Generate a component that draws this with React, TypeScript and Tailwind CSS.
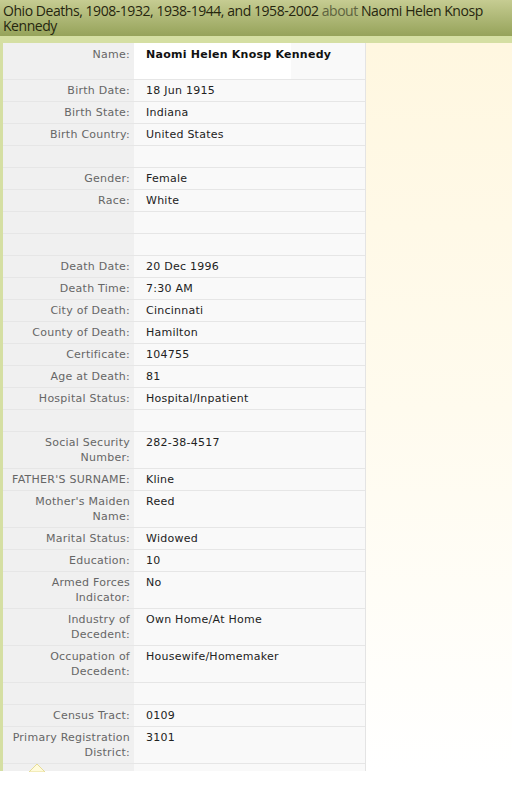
const rows: { label: string; value?: string }[] = [
  { label: "Birth Date:", value: "18 Jun 1915" },
  { label: "Birth State:", value: "Indiana" },
  { label: "Birth Country:", value: "United States" },
  { label: "" },
  { label: "Gender:", value: "Female" },
  { label: "Race:", value: "White" },
  { label: "" },
  { label: "" },
  { label: "Death Date:", value: "20 Dec 1996" },
  { label: "Death Time:", value: "7:30 AM" },
  { label: "City of Death:", value: "Cincinnati" },
  { label: "County of Death:", value: "Hamilton" },
  { label: "Certificate:", value: "104755" },
  { label: "Age at Death:", value: "81" },
  { label: "Hospital Status:", value: "Hospital/Inpatient" },
  { label: "" },
  { label: "Social Security Number:", value: "282-38-4517" },
  { label: "FATHER'S SURNAME:", value: "Kline" },
  { label: "Mother's Maiden Name:", value: "Reed" },
  { label: "Marital Status:", value: "Widowed" },
  { label: "Education:", value: "10" },
  { label: "Armed Forces Indicator:", value: "No" },
  { label: "Industry of Decedent:", value: "Own Home/At Home" },
  { label: "Occupation of Decedent:", value: "Housewife/Homemaker" },
  { label: "" },
  { label: "Census Tract:", value: "0109" },
  { label: "Primary Registration District:", value: "3101" },
];

export default function App() {
  return (
    <div className="w-[512px] h-[788px] bg-white overflow-hidden font-['DejaVu_Sans',Verdana,sans-serif]">
      <div className="h-[36px] bg-gradient-to-b from-[#c6cc92] to-[#96a35a] px-[3px] pt-[3px] text-[14px] leading-[15px] text-[#26260f] font-['Open_Sans',sans-serif] tracking-[-0.45px]">
        Ohio Deaths, 1908-1932, 1938-1944, and 1958-2002{" "}
        <span className="text-[#5e6340]">about</span> Naomi Helen Knosp Kennedy
      </div>
      <div className="h-[735px] border-l-[3px] border-[#d5dfa3] flex flex-col">
        <div className="h-[7px] bg-[#d5dfa3] shrink-0" />
        <div className="flex flex-1 min-h-0">
          <div className="w-[363px] shrink-0 flex flex-col border-r border-[#e4e4e4] bg-[#f9f9f9] text-[11px] leading-[15px] tracking-[0.25px]">
            <div className="flex h-[37px] border-b border-[#e6e6e6]">
              <div className="w-[131px] shrink-0 bg-[#f0f0f0] text-right text-[#666] pr-[4px] pt-[4px]">
                Name:
              </div>
              <div className="flex-1 relative pl-[12px] pt-[4px] text-[#111] font-bold">
                <div className="absolute left-0 top-0 bottom-0 w-[157px] bg-white" />
                <span className="relative">Naomi Helen Knosp Kennedy</span>
              </div>
            </div>
            {rows.map((r, i) => (
              <div key={i} className="flex border-b border-[#e6e6e6]">
                <div className="w-[131px] shrink-0 bg-[#f0f0f0] text-right text-[#666] pl-[8px] pr-[4px] py-[3px] min-h-[21px]">
                  {r.label}
                </div>
                <div className="flex-1 pl-[12px] py-[3px] text-[#222]">{r.value}</div>
              </div>
            ))}
            <div className="flex flex-1 relative">
              <div className="w-[131px] bg-[#f0f0f0]" />
              <div className="flex-1 bg-[#f9f9f9]" />
              <svg
                className="absolute left-[25px] top-[-1px]"
                width="18"
                height="9"
                viewBox="0 0 18 9"
              >
                <path d="M1 9 L9 1 L17 9 Z" fill="#fffbdc" stroke="#e6dc96" strokeWidth="1" />
              </svg>
            </div>
          </div>
          <div className="flex-1 bg-gradient-to-b from-[#fff7e0] via-[#fffbee] to-white" />
        </div>
      </div>
    </div>
  );
}
